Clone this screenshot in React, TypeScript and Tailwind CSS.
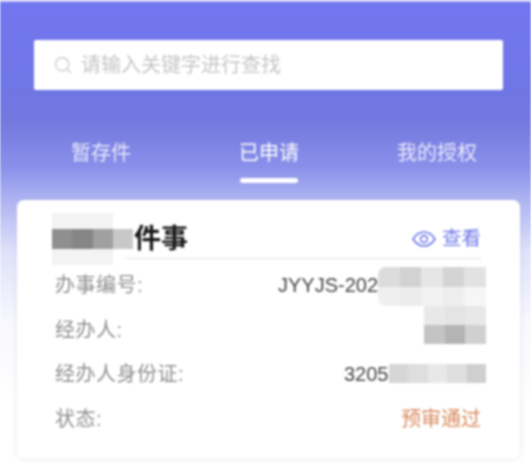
import { Search } from 'lucide-react'

const font = { fontFamily: '"Liberation Sans", "Noto Sans CJK SC", sans-serif' }

const tabs = ['暂存件', '已申请', '我的授权']

// mosaic cells that cover private data
const titleCells = [
  ['left-[0px] top-[0px] w-[61px] h-[52px]', 'bg-[#f4f3f4]'],
  ['left-[0px] top-[16px] w-[20px] h-[20px]', 'bg-[#8f8f8f]'],
  ['left-[20px] top-[16px] w-[21px] h-[20px]', 'bg-[#868686]'],
  ['left-[41px] top-[16px] w-[20px] h-[20px]', 'bg-[#a0a0a0]'],
  ['left-[61px] top-[16px] w-[20px] h-[20px]', 'bg-[#c8c8c8]'],
]

const idCols = ['#dcdcdc', '#d2d2d2', '#e6e6e6', '#d4d4d4', '#e2e2e2']
const idCols2 = ['#efefef', '#ececec', '#f2f2f2', '#eeeeee', '#f6f6f6']
const nameCols = ['#c4c4c4', '#b4b4b4', '#d0d0d0']
const nameCols2 = ['#e8e8e8', '#e4e4e4', '#e8e8e8']
const certCols = ['#d6d6d6', '#dedede', '#e8e8e8', '#dedede', '#cfcfcf']

function Mosaic({ cols, className }: { cols: string[]; className: string }) {
  return (
    <div className={`absolute flex overflow-hidden ${className}`}>
      {cols.map((c, i) => (
        <div key={i} className="flex-1" style={{ backgroundColor: c }} />
      ))}
    </div>
  )
}

function Row({ label, children }: { label: string; children: React.ReactNode }) {
  return (
    <div className="flex h-[44.5px] items-center justify-between">
      <span className="text-[20px] tracking-[0.5px] text-[#8f8f8f]">{label}</span>
      {children}
    </div>
  )
}

export default function App() {
  return (
    <div
      style={font}
      className="relative h-[466px] w-[531px] overflow-hidden border-t-2 border-[#c9cbf5] bg-[linear-gradient(180deg,#7276f0_0px,#6f76e4_90px,#7379de_120px,#8a90ea_165px,#abb1f1_195px,#dfe2fa_250px,#f8f8fe_320px,#ffffff_400px)] blur-[1px]"
    >
      <div className="ml-[34px] mt-[38px] flex h-[50px] w-[469px] items-center gap-[8px] rounded-[2px] bg-white pl-[19px]">
        <Search className="h-[20px] w-[20px] text-[#c4c4c4]" strokeWidth={1.5} />
        <span className="text-[20px] text-[#c6c6c6]">请输入关键字进行查找</span>
      </div>

      <div className="ml-[17px] mr-[10px] mt-[45px] grid grid-cols-3">
        {tabs.map((tab, i) => (
          <div key={tab} className="flex flex-col items-center">
            <span className={`text-[20px] leading-[36px] ${i === 1 ? 'text-white' : 'text-[#e8e9fd]'}`}>{tab}</span>
            <div className={`mt-[7px] h-[5px] w-[58px] rounded-full ${i === 1 ? 'bg-white' : ''}`} />
          </div>
        ))}
      </div>

      <div className="relative mx-[17px] mt-[17px] h-[258px] w-[503px] rounded-[7px] bg-white pl-[38px] pr-[39px] pt-[20px] shadow-[0_0_6px_rgba(190,190,215,0.35)]">
        <div className="flex h-[38px] items-center justify-between">
          <span className="pl-[79px] text-[27px] font-bold text-[#1a1a1a]">件事</span>
          <div className="flex items-center gap-[6px] text-[#6f7be6]">
            <svg width="24" height="16" viewBox="0 0 24 16" fill="none" stroke="currentColor" strokeWidth="1.6">
              <path d="M1 8C4 3.2 8 1 12 1S20 3.2 23 8C20 12.8 16 15 12 15S4 12.8 1 8Z" />
              <circle cx="12" cy="8" r="3.4" />
            </svg>
            <span className="text-[19.5px]">查看</span>
          </div>
        </div>
        <div className="ml-[70px] h-px bg-[#e4e4e4]" />

        <div className="pt-[4px]">
          <Row label="办事编号:">
            <span className="w-[203px] text-[20px] text-[#444444]">JYYJS-2024</span>
          </Row>
          <Row label="经办人:">
            <span />
          </Row>
          <Row label="经办人身份证:">
            <span className="w-[137px] text-[20px] text-[#444444]">3205</span>
          </Row>
          <Row label="状态:">
            <span className="text-[20px] text-[#d98a5e]">预审通过</span>
          </Row>
        </div>

        {/* mosaics over the masked values */}
        <div className="absolute left-[35px] top-[13px] h-[52px] w-[81px]">
          {titleCells.map(([pos, bg]) => (
            <div key={pos} className={`absolute ${pos} ${bg}`} />
          ))}
        </div>
        <Mosaic cols={idCols} className="left-[361px] top-[67px] h-[20px] w-[108px] rounded-tl-[8px]" />
        <Mosaic cols={idCols2} className="left-[361px] top-[87px] h-[19px] w-[108px] rounded-bl-[8px]" />
        <Mosaic cols={nameCols2} className="left-[407px] top-[106px] h-[19px] w-[62px]" />
        <Mosaic cols={nameCols} className="left-[407px] top-[125px] h-[19px] w-[62px]" />
        <Mosaic cols={certCols} className="left-[372px] top-[164px] h-[19px] w-[97px]" />
      </div>
    </div>
  )
}
